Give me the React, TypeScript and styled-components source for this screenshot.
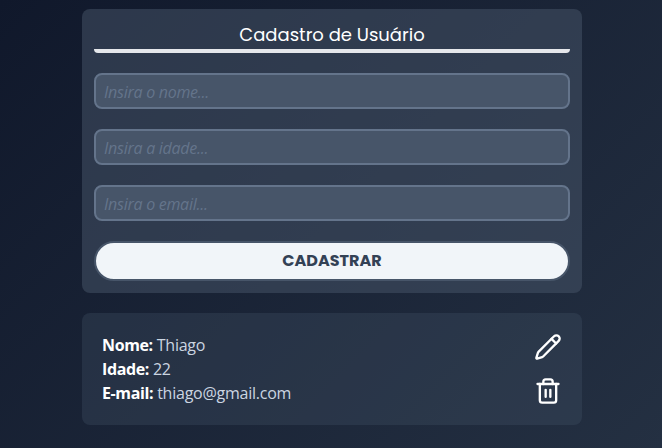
import React from "react";
import styled, { createGlobalStyle } from "styled-components";
import { Pencil, Trash2 } from "lucide-react";

const GlobalStyle = createGlobalStyle`
  * { box-sizing: border-box; margin: 0; padding: 0; }
  body {
    font-family: "Segoe UI", "Open Sans", "Noto Sans", sans-serif;
    font-size: 16px;
    line-height: 24px;
    color: #e2e8f0;
    overflow: hidden;
  }
`;

const Page = styled.main`
  width: 100%;
  height: 448px;
  padding: 9px 0 0 2px;
  display: flex;
  flex-direction: column;
  align-items: center;
  gap: 20px;
  background: linear-gradient(135deg, #10182b, #243042);
`;

const Form = styled.form`
  width: 500px;
  height: 284px;
  padding: 12px;
  display: flex;
  flex-direction: column;
  gap: 20px;
  border-radius: 8px;
  background: rgba(71, 85, 105, 0.5);
`;

const Title = styled.h1`
  height: 32px;
  display: flex;
  justify-content: center;
  border-bottom: 4px solid #e5e7eb;
  border-radius: 4px;
  color: #fff;
  font-family: Poppins, Inter, sans-serif;
  font-size: 18px;
  font-weight: 400;
  line-height: 27px;
  white-space: nowrap;
`;

const Field = styled.input`
  height: 36px;
  flex: none;
  padding: 2px 8px 0;
  border: 2px solid #64748b;
  border-radius: 8px;
  background: #475569;
  color: #f1f5f9;
  font: inherit;
  outline: none;
  &::placeholder {
    color: #64748b;
    font-style: italic;
    letter-spacing: -0.27px;
    opacity: 1;
  }
`;

const Submit = styled.button`
  height: 40px;
  flex: none;
  border: 2px solid #475569;
  border-radius: 20px;
  background: #f1f5f9;
  color: #334155;
  font: 700 16px/24px Poppins, Inter, sans-serif;
`;

const UserCard = styled.section`
  width: 500px;
  height: 112px;
  padding: 20px;
  display: flex;
  justify-content: space-between;
  align-items: center;
  border-radius: 8px;
  background: rgba(71, 85, 105, 0.3);
`;

const Details = styled.dl`
  color: #cbd5e1;
`;

const Detail = styled.div`
  display: flex;
  gap: 4px;
  height: 24px;
`;

const Label = styled.dt`
  color: #fff;
  font-weight: 700;
  letter-spacing: -0.38px;
`;

const Value = styled.dd`
  letter-spacing: -0.24px;
`;

const Actions = styled.div`
  display: flex;
  flex-direction: column;
  gap: 16px;
  color: #fff;
  svg { display: block; }
`;

const placeholders = ["Insira o nome...", "Insira a idade...", "Insira o email..."];

const user = [
  ["Nome:", "Thiago"],
  ["Idade:", "22"],
  ["E-mail:", "thiago@gmail.com"],
];

export default function App() {
  return (
    <Page>
      <GlobalStyle />
      <Form>
        <Title>Cadastro de Usuário</Title>
        {placeholders.map((text) => (
          <Field key={text} placeholder={text} />
        ))}
        <Submit type="button">CADASTRAR</Submit>
      </Form>
      <UserCard>
        <Details>
          {user.map(([label, value]) => (
            <Detail key={label}>
              <Label>{label}</Label>
              <Value>{value}</Value>
            </Detail>
          ))}
        </Details>
        <Actions>
          <Pencil size={28} />
          <Trash2 size={28} />
        </Actions>
      </UserCard>
    </Page>
  );
}
